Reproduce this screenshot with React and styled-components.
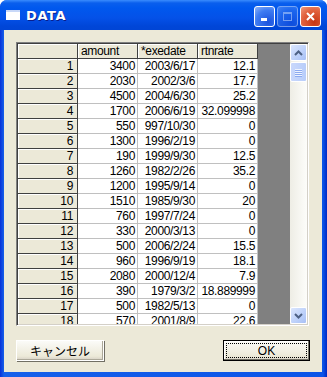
import styled, { createGlobalStyle } from 'styled-components';

const GlobalStyle = createGlobalStyle`
  html, body {
    margin: 0;
    padding: 0;
    background: #ffffff;
  }
  * {
    box-sizing: border-box;
  }
`;

const rows = [
  [1, 3400, '2003/6/17', '12.1'],
  [2, 2030, '2002/3/6', '17.7'],
  [3, 4500, '2004/6/30', '25.2'],
  [4, 1700, '2006/6/19', '32.099998'],
  [5, 550, '997/10/30', '0'],
  [6, 1300, '1996/2/19', '0'],
  [7, 190, '1999/9/30', '12.5'],
  [8, 1260, '1982/2/26', '35.2'],
  [9, 1200, '1995/9/14', '0'],
  [10, 1510, '1985/9/30', '20'],
  [11, 760, '1997/7/24', '0'],
  [12, 330, '2000/3/13', '0'],
  [13, 500, '2006/2/24', '15.5'],
  [14, 960, '1996/9/19', '18.1'],
  [15, 2080, '2000/12/4', '7.9'],
  [16, 390, '1979/3/2', '18.889999'],
  [17, 500, '1982/5/13', '0'],
  [18, 570, '2001/8/9', '22.6'],
];

const Window = styled.div`
  width: 327px;
  height: 377px;
  display: flex;
  flex-direction: column;
  background: linear-gradient(90deg, #0831d9 0px, #1660ea 4px, #0a54e8 calc(100% - 4px), #0029c4 100%);
  border-radius: 7px 7px 0 0;
  font-family: "Liberation Sans", "Noto Sans CJK JP", sans-serif;
`;

const TitleBar = styled.div`
  height: 30px;
  flex: none;
  display: flex;
  align-items: center;
  padding: 0 6px 0 6px;
  border-radius: 7px 7px 0 0;
  background: linear-gradient(180deg, #3a8cfd 0px, #0a5fed 3px, #0058ee 8px, #0451e8 18px, #0046d8 26px, #0045d5 30px);
`;

const TitleIcon = styled.div`
  width: 14px;
  height: 10px;
  background: #ffffff;
  border-top: 2px solid #c8d8f8;
  margin-right: 6px;
`;

const Title = styled.div`
  color: #ffffff;
  font-family: "DejaVu Sans", sans-serif;
  font-weight: bold;
  font-size: 13px;
  letter-spacing: 0.6px;
  text-shadow: 1px 1px 0 #0a1e8c;
  flex: 1;
`;

const CaptionButtons = styled.div`
  display: flex;
  gap: 2px;
  margin-top: 2px;
`;

const CaptionButton = styled.div`
  width: 21px;
  height: 21px;
  border: 1px solid #ffffff;
  border-radius: 3px;
  display: flex;
  align-items: center;
  justify-content: center;
  opacity: ${p => (p.$disabled ? 0.45 : 1)};
  background: ${p =>
    p.$close
      ? 'radial-gradient(circle at 70% 80%, #c83512 0%, #e2633f 60%, #f09a7e 100%)'
      : 'radial-gradient(circle at 70% 80%, #1b52dd 0%, #3f7cf2 60%, #8fb4f8 100%)'};
`;

const Client = styled.div`
  flex: 1;
  margin: 0 5px 5px 4px;
  background: #ece9d8;
  display: flex;
  flex-direction: column;
  padding: 12px 0 0 12px;
`;

const GridFrame = styled.div`
  width: 293px;
  height: 284px;
  display: flex;
  border-top: 1px solid #808080;
  border-left: 1px solid #808080;
  border-right: 1px solid #ffffff;
  border-bottom: 1px solid #ffffff;
  box-shadow: inset 1px 1px 0 #404040, inset -1px -1px 0 #d4d0c8;
  padding: 1px;
`;

const TableArea = styled.div`
  flex: 1;
  background: #808080;
  overflow: hidden;
`;

const Table = styled.div`
  display: grid;
  grid-template-columns: 60px 60px 60px 60px;
  grid-auto-rows: 15px;
  width: 240px;
  font-size: 12px;
  line-height: 14px;
  letter-spacing: -0.35px;
  color: #000000;
`;

const HeaderBase = styled.div`
  background: #ece9d8;
  border-right: 1px solid #404040;
  border-bottom: 1px solid #404040;
  box-shadow: inset 1px 1px 0 #ffffff;
  white-space: nowrap;
  overflow: hidden;
`;

const Corner = styled(HeaderBase)``;

const ColHeader = styled(HeaderBase)`
  padding-left: 3px;
`;

const RowHeader = styled(HeaderBase)`
  text-align: right;
  padding-right: 4px;
`;

const Cell = styled.div`
  background: #ffffff;
  border-right: 1px solid #c0c0c0;
  border-bottom: 1px solid #c0c0c0;
  text-align: right;
  padding-right: 2px;
  white-space: nowrap;
  overflow: hidden;
`;

const ScrollBar = styled.div`
  width: 17px;
  display: flex;
  flex-direction: column;
  background: linear-gradient(90deg, #eeede5, #fdfdfa);
`;

const ScrollButton = styled.div`
  width: 17px;
  height: 17px;
  flex: none;
  border: 1px solid #ffffff;
  border-radius: 2px;
  background: linear-gradient(135deg, #dbe6fd 0%, #bcd0fa 60%, #a8c0f5 100%);
  display: flex;
  align-items: center;
  justify-content: center;
`;

const Thumb = styled.div`
  width: 17px;
  height: 20px;
  margin-top: 1px;
  border: 1px solid #ffffff;
  border-radius: 2px;
  background: linear-gradient(90deg, #c9d8fc, #b8cdfa);
  display: flex;
  flex-direction: column;
  align-items: center;
  justify-content: center;
  gap: 1px;
`;

const Grip = styled.div`
  width: 7px;
  height: 1px;
  background: #eef3fe;
  box-shadow: 0 1px 0 #8caaf0;
`;

const Track = styled.div`
  flex: 1;
`;

const ButtonRow = styled.div`
  display: flex;
  justify-content: space-between;
  width: 294px;
  margin-top: 14px;
`;

const PushButton = styled.div`
  width: ${p => (p.$default ? '87px' : '88px')};
  height: 21px;
  background: linear-gradient(180deg, #fbfbf8, #ece9d8 80%, #d6d0c5);
  border: 1px solid ${p => (p.$default ? '#000000' : '#ffffff')};
  box-shadow: ${p =>
    p.$default
      ? 'inset -1px -1px 0 #716f64, inset 1px 1px 0 #ffffff'
      : '1px 1px 0 #716f64, inset -1px -1px 0 #aca899'};
  display: flex;
  align-items: center;
  justify-content: center;
  padding: 2px;
  font-size: 12px;
  color: #000000;
`;

const FocusRect = styled.div`
  flex: 1;
  align-self: stretch;
  border: 1px dotted #000000;
  display: flex;
  align-items: center;
  justify-content: center;
`;

const Chevron = ({ up }) => (
  <svg width="9" height="6" viewBox="0 0 9 6">
    <path
      d={up ? 'M1 5 L4.5 1.5 L8 5' : 'M1 1 L4.5 4.5 L8 1'}
      fill="none"
      stroke="#4d6185"
      strokeWidth="2"
    />
  </svg>
);

export default function App() {
  return (
    <>
      <GlobalStyle />
      <Window>
        <TitleBar>
          <TitleIcon />
          <Title>DATA</Title>
          <CaptionButtons>
            <CaptionButton>
              <svg width="11" height="11" viewBox="0 0 11 11">
                <rect x="2" y="7" width="6" height="3" fill="#ffffff" />
              </svg>
            </CaptionButton>
            <CaptionButton $disabled>
              <svg width="11" height="11" viewBox="0 0 11 11">
                <rect x="1.5" y="1.5" width="8" height="8" fill="none" stroke="#ffffff" />
                <rect x="1" y="1" width="9" height="2" fill="#ffffff" />
              </svg>
            </CaptionButton>
            <CaptionButton $close>
              <svg width="11" height="11" viewBox="0 0 11 11">
                <path d="M2 2 L9 9 M9 2 L2 9" stroke="#ffffff" strokeWidth="2" />
              </svg>
            </CaptionButton>
          </CaptionButtons>
        </TitleBar>
        <Client>
          <GridFrame>
            <TableArea>
              <Table>
                <Corner />
                <ColHeader>amount</ColHeader>
                <ColHeader>*exedate</ColHeader>
                <ColHeader>rtnrate</ColHeader>
                {rows.flatMap(([n, amount, date, rate]) => [
                  <RowHeader key={`h${n}`}>{n}</RowHeader>,
                  <Cell key={`a${n}`}>{amount}</Cell>,
                  <Cell key={`d${n}`}>{date}</Cell>,
                  <Cell key={`r${n}`}>{rate}</Cell>,
                ])}
              </Table>
            </TableArea>
            <ScrollBar>
              <ScrollButton>
                <Chevron up />
              </ScrollButton>
              <Thumb>
                <Grip />
                <Grip />
                <Grip />
                <Grip />
              </Thumb>
              <Track />
              <ScrollButton>
                <Chevron />
              </ScrollButton>
            </ScrollBar>
          </GridFrame>
          <ButtonRow>
            <PushButton>キャンセル</PushButton>
            <PushButton $default>
              <FocusRect>OK</FocusRect>
            </PushButton>
          </ButtonRow>
        </Client>
      </Window>
    </>
  );
}
